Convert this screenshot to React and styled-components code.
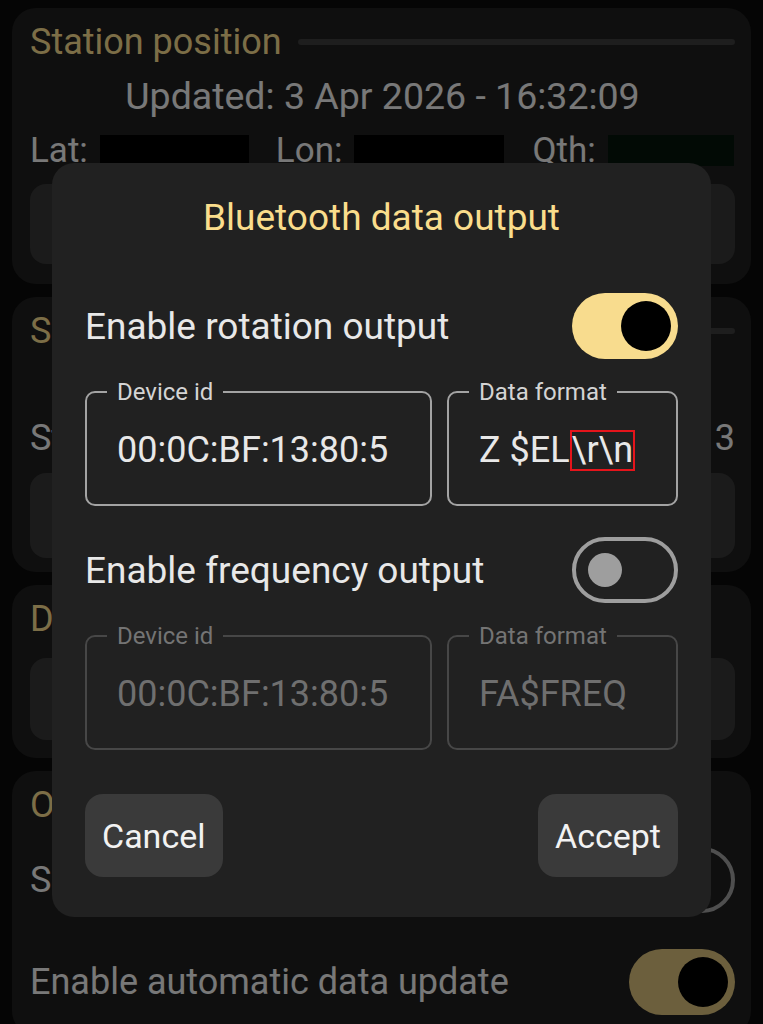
import React from "react";
import styled, { createGlobalStyle } from "styled-components";

const GlobalStyle = createGlobalStyle`
  html, body {
    margin: 0;
    padding: 0;
    background: #0a0a0a;
  }
  body {
    font-family: Roboto, "Noto Sans", sans-serif;
  }
  * {
    box-sizing: border-box;
  }
`;

const GOLD = "#f8dc8e";

const Page = styled.div`
  height: 1024px;
  overflow: hidden;
  padding: 8px 12px 0;
  display: flex;
  flex-direction: column;
  gap: 13px;
  background: #0a0a0a;
`;

const Card = styled.section`
  background: #1e1e1e;
  border-radius: 24px;
  padding: 14px 16px ${(p) => p.$bottom || 20}px 18px;
  display: flex;
  flex-direction: column;
  gap: 14px;
`;

const TitleRow = styled.div`
  height: 40px;
  display: flex;
  align-items: center;
  gap: 16px;
`;

const CardTitle = styled.h2`
  margin: 0;
  font-size: 36px;
  font-weight: 400;
  color: ${GOLD};
  white-space: nowrap;
`;

const Divider = styled.div`
  flex: 1;
  height: 6px;
  border-radius: 3px;
  background: #3c3c3c;
`;

const Updated = styled.div`
  height: 40px;
  line-height: 40px;
  text-align: center;
  font-size: 37.5px;
  color: #f0f0f0;
`;

const CoordRow = styled.div`
  height: 40px;
  display: flex;
  align-items: center;
`;

const CoordLabel = styled.span`
  font-size: 35px;
  color: #f0f0f0;
  margin-left: ${(p) => p.$gap || 0}px;
`;

const Redacted = styled.span`
  display: inline-block;
  width: ${(p) => p.$w}px;
  height: 31px;
  margin-left: 12px;
  background: ${(p) => p.$tint || "#000"};
`;

const InnerBox = styled.div`
  height: ${(p) => p.$h || 80}px;
  margin-top: ${(p) => p.$mt || 0}px;
  border-radius: 16px;
  background: #363636;
`;

const SettingRow = styled.div`
  display: flex;
  align-items: center;
  justify-content: space-between;
  min-height: 40px;
  margin-top: ${(p) => p.$mt || 0}px;
  font-size: 36px;
  color: #f0f0f0;
`;

const Switch = styled.div`
  flex: none;
  width: 106px;
  height: 66px;
  border-radius: 33px;
  display: flex;
  align-items: center;
  justify-content: ${(p) => (p.$on ? "flex-end" : "flex-start")};
  padding: 0 ${(p) => (p.$on ? "7px" : "12px")};
  background: ${(p) => (p.$on ? p.$color : "transparent")};
  border: ${(p) => (p.$on ? "none" : `4px solid ${p.$color}`)};
`;

const Knob = styled.span`
  width: ${(p) => (p.$on ? 50 : 34)}px;
  height: ${(p) => (p.$on ? 50 : 34)}px;
  border-radius: 50%;
  background: ${(p) => (p.$on ? "#000" : p.$color)};
`;

const Scrim = styled.div`
  position: fixed;
  inset: 0;
  background: rgba(0, 0, 0, 0.5);
  display: flex;
  justify-content: center;
  align-items: flex-start;
  padding-top: 163px;
`;

const Dialog = styled.div`
  width: 659px;
  background: #212121;
  border-radius: 22px;
  padding: 33px 33px 40px;
  display: flex;
  flex-direction: column;
`;

const DialogTitle = styled.h1`
  margin: 0;
  text-align: center;
  font-size: 37px;
  line-height: 44px;
  font-weight: 400;
  color: #fadd8c;
`;

const Body = styled.div`
  margin-top: 53px;
  display: flex;
  flex-direction: column;
  gap: 31px;
`;

const Group = styled.div`
  display: flex;
  flex-direction: column;
  gap: 19px;
`;

const OptionRow = styled.div`
  display: flex;
  align-items: center;
  justify-content: space-between;
`;

const OptionLabel = styled.span`
  font-size: 37px;
  color: #e8e8e8;
`;

const Fields = styled.div`
  display: grid;
  grid-template-columns: 347fr 231fr;
  gap: 15px;
`;

const Field = styled.fieldset`
  margin: 0;
  min-width: 0;
  padding: 0 20px 32px;
  border: 2px solid ${(p) => (p.$disabled ? "#474747" : "#a3a3a3")};
  border-radius: 10px;
`;

const FieldLabel = styled.legend`
  padding: 0 10px;
  font-size: 24px;
  line-height: 28px;
  color: ${(p) => (p.$disabled ? "#747474" : "#d4d4d4")};
`;

const FieldValue = styled.div`
  padding: 22px 10px 0;
  font-size: 36px;
  line-height: 44px;
  white-space: nowrap;
  overflow: hidden;
  color: ${(p) => (p.$disabled ? "#6f6f6f" : "#e8e8e8")};
`;

const Highlight = styled.span`
  display: inline-block;
  border: 2px solid #e5141b;
  line-height: 37px;
`;

const Actions = styled.div`
  margin-top: 44px;
  display: flex;
  justify-content: space-between;
`;

const Button = styled.button`
  height: 83px;
  padding: 0 17px;
  border: none;
  border-radius: 18px;
  background: #3a3a3a;
  color: #f2f2f2;
  font-family: Roboto, "Noto Sans", sans-serif;
  font-size: 34px;
`;

function Toggle({ on, color }) {
  return (
    <Switch $on={on} $color={color}>
      <Knob $on={on} $color={color} />
    </Switch>
  );
}

function OutputField({ label, disabled, children }) {
  return (
    <Field $disabled={disabled}>
      <FieldLabel $disabled={disabled}>{label}</FieldLabel>
      <FieldValue $disabled={disabled}>{children}</FieldValue>
    </Field>
  );
}

function Background() {
  return (
    <Page>
      <Card>
        <TitleRow>
          <CardTitle>Station position</CardTitle>
          <Divider />
        </TitleRow>
        <Updated>Updated: 3 Apr 2026 - 16:32:09</Updated>
        <CoordRow>
          <CoordLabel>Lat:</CoordLabel>
          <Redacted $w={149} />
          <CoordLabel $gap={27}>Lon:</CoordLabel>
          <Redacted $w={150} />
          <CoordLabel $gap={28}>Qth:</CoordLabel>
          <Redacted $w={126} $tint="#04140b" />
        </CoordRow>
        <InnerBox />
      </Card>

      <Card $bottom={14}>
        <TitleRow>
          <CardTitle>Sun tracking</CardTitle>
          <Divider />
        </TitleRow>
        <SettingRow $mt={52}>
          <span>Step size</span>
          <span>3</span>
        </SettingRow>
        <InnerBox $h={85} />
      </Card>

      <Card $bottom={18}>
        <TitleRow>
          <CardTitle>Data source</CardTitle>
        </TitleRow>
        <InnerBox $h={82} $mt={5} />
      </Card>

      <Card>
        <TitleRow>
          <CardTitle>Output</CardTitle>
        </TitleRow>
        <SettingRow $mt={8}>
          <span>Send data over serial</span>
          <Toggle on={false} color="#9e9e9e" />
        </SettingRow>
        <SettingRow $mt={22}>
          <span>Enable automatic data update</span>
          <Toggle on color="#d8bf7a" />
        </SettingRow>
      </Card>
    </Page>
  );
}

export default function App() {
  return (
    <>
      <GlobalStyle />
      <Background />
      <Scrim>
        <Dialog>
          <DialogTitle>Bluetooth data output</DialogTitle>
          <Body>
            <Group>
              <OptionRow>
                <OptionLabel>Enable rotation output</OptionLabel>
                <Toggle on color={GOLD} />
              </OptionRow>
              <Fields>
                <OutputField label="Device id">00:0C:BF:13:80:5</OutputField>
                <OutputField label="Data format">
                  Z $EL<Highlight>{"\\r\\n"}</Highlight>
                </OutputField>
              </Fields>
            </Group>
            <Group>
              <OptionRow>
                <OptionLabel>Enable frequency output</OptionLabel>
                <Toggle on={false} color="#9e9e9e" />
              </OptionRow>
              <Fields>
                <OutputField label="Device id" disabled>
                  00:0C:BF:13:80:5
                </OutputField>
                <OutputField label="Data format" disabled>
                  FA$FREQ
                </OutputField>
              </Fields>
            </Group>
          </Body>
          <Actions>
            <Button>Cancel</Button>
            <Button>Accept</Button>
          </Actions>
        </Dialog>
      </Scrim>
    </>
  );
}
